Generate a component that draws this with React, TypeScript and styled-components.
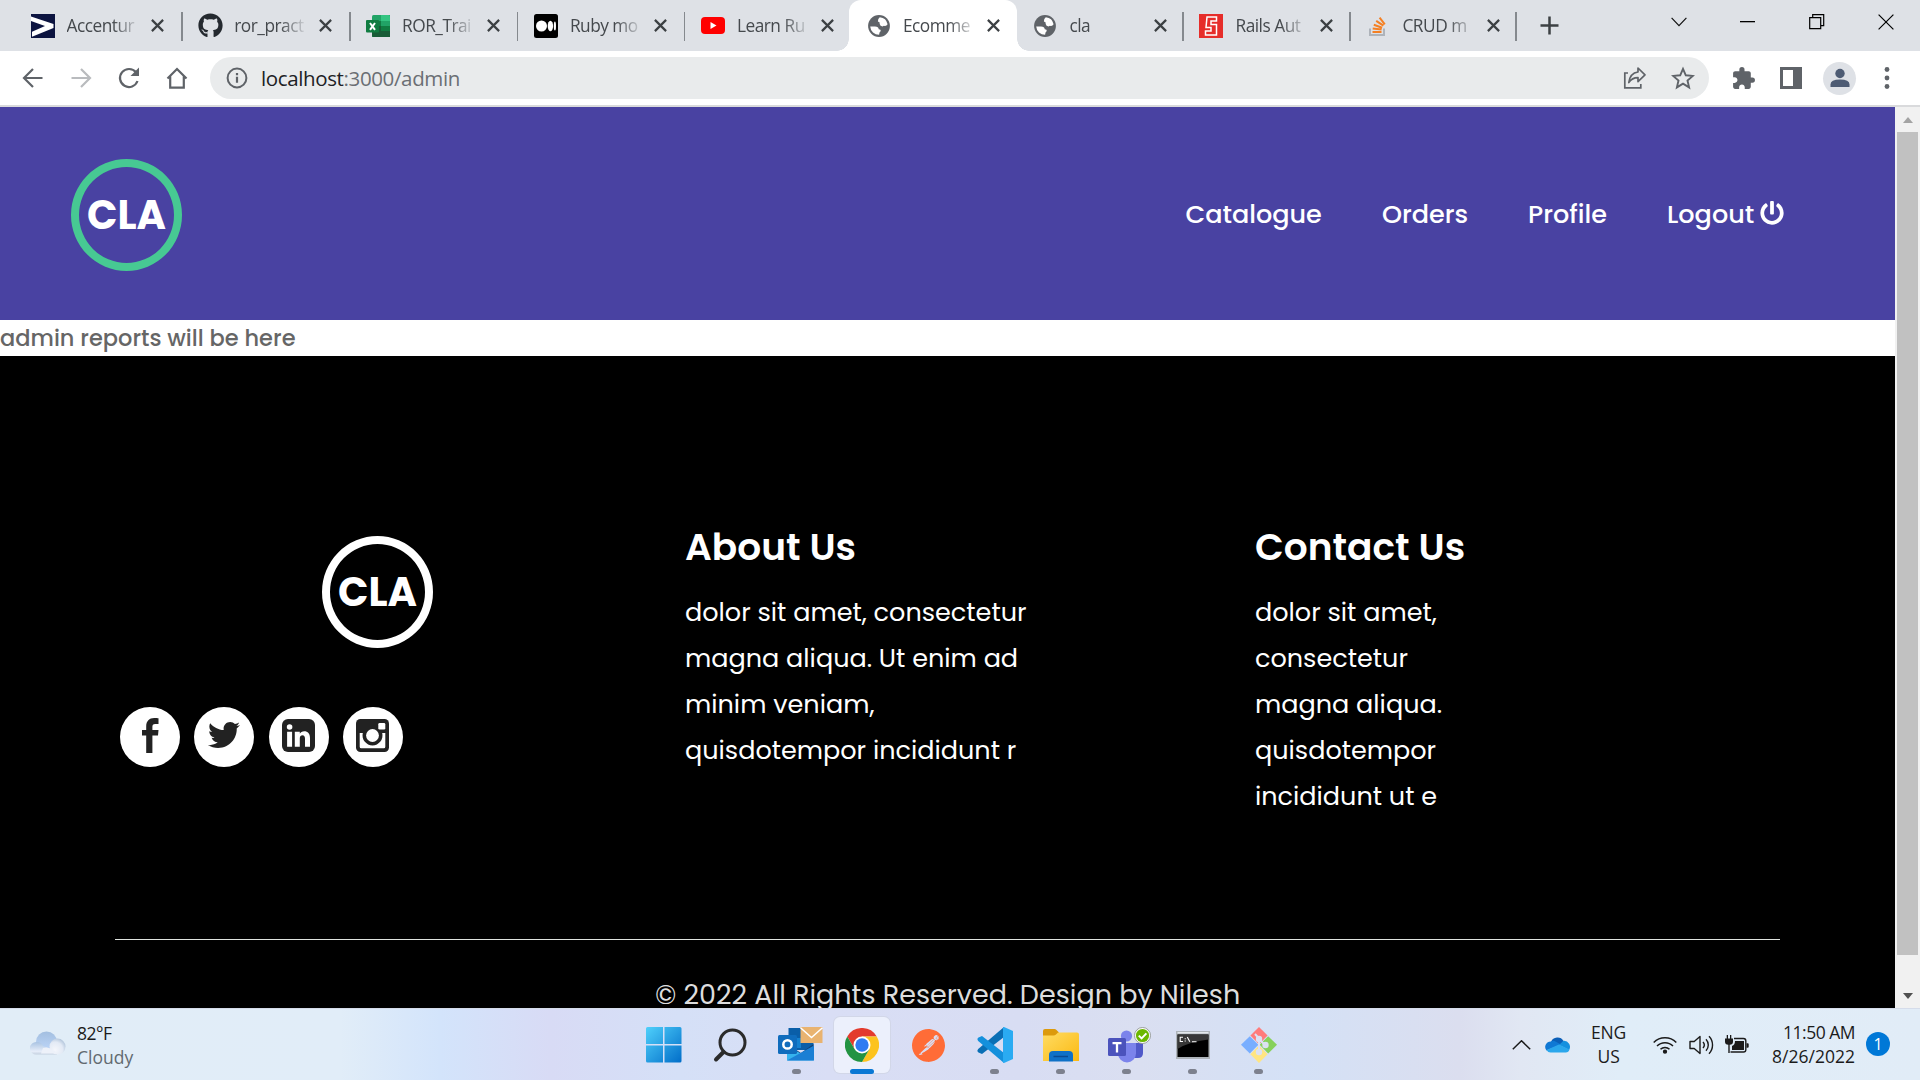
import React from "react";
import styled, { createGlobalStyle, css } from "styled-components";
import { FaGithub, FaTwitter, FaPowerOff } from "react-icons/fa";
import { MdExtension } from "react-icons/md";
import { SiPostman } from "react-icons/si";

const ui = `"Segoe UI", "Open Sans", "Noto Sans", sans-serif`;
const brand = `Poppins, Inter, "Open Sans", sans-serif`;

const Global = createGlobalStyle`
  * { box-sizing: border-box; }
  body { margin: 0; background: #fff; overflow: hidden; }
  h2, p { margin: 0; }
  svg { display: block; flex: none; }
`;

const Screen = styled.div`
  width: 1920px;
  height: 1080px;
  display: flex;
  flex-direction: column;
  overflow: hidden;
  font-family: ${ui};
`;

/* ---------- browser tabs ---------- */
const TabStrip = styled.div`
  display: flex;
  height: 51px;
  flex: none;
  padding-left: 14px;
  background: #dee1e6;
`;

const Tab = styled.div<{ $width: number; $active?: boolean; $divider?: boolean }>`
  position: relative;
  display: flex;
  align-items: center;
  width: ${(p) => p.$width}px;
  height: 51px;
  padding-left: ${(p) => (p.$active ? 18 : 16.5)}px;
  flex: none;
  ${(p) =>
    p.$divider &&
    css`
      &::after {
        content: "";
        position: absolute;
        right: -1px;
        top: 12px;
        width: 1.5px;
        height: 29px;
        background: #85898e;
      }
    `}
  ${(p) =>
    p.$active &&
    css`
      background: #fff;
      border-radius: 12px 12px 0 0;
      &::before,
      &::after {
        content: "";
        position: absolute;
        bottom: 0;
        width: 12px;
        height: 12px;
      }
      &::before {
        left: -12px;
        background: radial-gradient(circle at 0 0, transparent 11.5px, #fff 12px);
      }
      &::after {
        right: -12px;
        background: radial-gradient(circle at 100% 0, transparent 11.5px, #fff 12px);
      }
    `}
`;

const Favicon = styled.div`
  width: 24px;
  height: 24px;
  flex: none;
  display: flex;
  align-items: center;
  justify-content: center;
`;

const TabTitle = styled.span`
  width: 75px;
  margin: 0 9.5px 0 12px;
  white-space: nowrap;
  font-size: 17.3px;
  line-height: 28px;
  letter-spacing: -0.5px;
  color: #45494d;
  mask-image: linear-gradient(90deg, #000 46px, transparent 74px);
`;

const NewTab = styled.div`
  display: flex;
  align-items: center;
  width: 54px;
  padding-left: 24px;
`;

const WindowControls = styled.div`
  display: flex;
  align-items: center;
  height: 43px;
  margin-left: auto;
  & > div {
    width: 69px;
    display: flex;
    justify-content: center;
  }
`;

/* ---------- toolbar ---------- */
const Toolbar = styled.div`
  display: flex;
  align-items: center;
  height: 56px;
  flex: none;
  padding: 0 21px 0 21px;
  background: #fff;
  border-bottom: 2px solid #d9dadc;
`;

const NavButtons = styled.div`
  display: flex;
  gap: 24px;
  width: 189px;
`;

const Omnibox = styled.div`
  display: flex;
  align-items: center;
  width: 1499px;
  height: 42px;
  padding: 0 14px 0 16px;
  border-radius: 21px;
  background: #e9ebec;
`;

const Url = styled.span`
  flex: 1;
  padding-left: 13px;
  font-size: 20.5px;
  line-height: 28px;
  letter-spacing: -0.37px;
  color: #6b6f74;
  b {
    font-weight: 400;
    color: #202124;
  }
`;

const OmniActions = styled.div`
  display: flex;
  gap: 24px;
`;

const ToolActions = styled.div`
  display: flex;
  align-items: center;
  margin-left: auto;
`;

const Avatar = styled.div`
  display: flex;
  align-items: center;
  justify-content: center;
  width: 33px;
  height: 33px;
  margin: 0 19px 0 21px;
  border-radius: 50%;
  background: #dee1e6;
`;

/* ---------- page ---------- */
const Viewport = styled.div`
  display: flex;
  height: 901px;
  flex: none;
`;

const Page = styled.div`
  display: flex;
  flex-direction: column;
  width: 1895px;
  overflow: hidden;
  font-family: ${brand};
`;

const Header = styled.header`
  display: flex;
  align-items: center;
  justify-content: space-between;
  height: 213px;
  flex: none;
  padding: 2px 109px 0 71px;
  background: #4942a2;
`;

const Logo = styled.div<{ $ring: string }>`
  display: flex;
  align-items: center;
  justify-content: center;
  width: 111px;
  height: 112px;
  border: 8px solid ${(p) => p.$ring};
  border-radius: 50%;
  color: #fff;
  font-size: 40px;
  font-weight: 700;
  line-height: 40px;
`;

const Menu = styled.nav`
  display: flex;
  align-items: center;
`;

const MenuItem = styled.a<{ $width: number }>`
  display: flex;
  align-items: center;
  width: ${(p) => p.$width}px;
  color: #fff;
  font-size: 25.5px;
  font-weight: 500;
  line-height: 38px;
  padding-bottom: 2px;
  white-space: nowrap;
  svg { margin: -2px 0 0 6px; }
`;

const Report = styled.div`
  height: 36px;
  flex: none;
  color: #666;
  font-size: 22.5px;
  font-weight: 500;
  line-height: 36px;
`;

const Footer = styled.footer`
  flex: 1;
  padding: 167px 115px 0;
  background: #000;
  color: #fff;
`;

const Columns = styled.div`
  display: grid;
  grid-template-columns: 570px 570px 525px;
  height: 417px;
  border-bottom: 1px solid #dfe3df;
`;

const BrandColumn = styled.div`
  padding-top: 13px;
  ${Logo} { margin-left: 207px; }
`;

const Socials = styled.div`
  display: flex;
  gap: 14.3px;
  padding: 59px 0 0 5px;
`;

const Social = styled.a`
  display: flex;
  align-items: center;
  justify-content: center;
  width: 60px;
  height: 60px;
  padding-bottom: 4px;
  border-radius: 50%;
  background: #fff;
  color: #222;
`;

const Heading = styled.h2`
  padding-top: 1px;
  margin-bottom: 20px;
  font-size: 37.5px;
  font-weight: 600;
  line-height: 46px;
`;

const Line = styled.p`
  font-size: 25.5px;
  line-height: 45.9px;
  white-space: nowrap;
`;

const Copyright = styled.p`
  padding: 37px 0 0 540px;
  color: #ddd;
  font-size: 27px;
  line-height: 36px;
  white-space: nowrap;
`;

const Scrollbar = styled.div`
  display: flex;
  flex-direction: column;
  align-items: center;
  justify-content: space-between;
  width: 25px;
  padding: 10px 0 9px;
  background: #f1f1f1;
`;

const Thumb = styled.div`
  width: 21px;
  height: 823px;
  margin: 9px 0 auto;
  background: #c1c1c1;
`;

const Arrow = styled.div<{ $up?: boolean }>`
  border: 5.5px solid transparent;
  ${(p) =>
    p.$up
      ? css`border-top: 0; border-bottom: 6px solid #a3a3a3;`
      : css`border-bottom: 0; border-top: 6px solid #505050;`}
`;

/* ---------- taskbar ---------- */
const Taskbar = styled.div`
  display: flex;
  height: 72px;
  flex: none;
  border-top: 1px solid #d5dcea;
  background: linear-gradient(90deg, #e1edf7 0, #e1edf8 340px, #d3e4fb 440px, #d8dbf5 550px, #d5e0f7 680px, #d9def5 830px, #d8ddf3 1020px, #dadff1 1140px, #d4e1f6 1300px, #dbdeef 1460px, #e1e7f3 1520px, #e0edf8 1620px, #e1ecf7 100%);
`;

const Weather = styled.div`
  display: flex;
  align-items: center;
  width: 631px;
  padding: 2px 0 0 29px;
  gap: 11px;
  svg { margin-top: -5px; }
`;

const Stack = styled.div<{ $align?: string; $spacing?: number }>`
  display: flex;
  flex-direction: column;
  align-items: ${(p) => p.$align ?? "flex-start"};
  color: #1b1b1b;
  font-size: 17.5px;
  line-height: 23.5px;
  letter-spacing: ${(p) => p.$spacing ?? 0}px;
  white-space: nowrap;
`;

const Muted = styled.span`
  color: #626a70;
`;

const Tight = styled.span`
  letter-spacing: -0.5px;
`;

const Apps = styled.div`
  display: flex;
`;

const AppButton = styled.div<{ $active?: boolean; $dot?: boolean; $shift?: number }>`
  position: relative;
  display: flex;
  align-items: center;
  justify-content: center;
  width: 56px;
  height: 56px;
  margin: 8px 5.05px;
  padding-left: ${(p) => p.$shift ?? 0}px;
  border-radius: 6px;
  ${(p) => p.$active && css`background: #ecf0fc; box-shadow: 0 0 0 1px #d2d7e8;`}
  ${(p) =>
    (p.$active || p.$dot) &&
    css`
      &::after {
        content: "";
        position: absolute;
        bottom: -1px;
        left: calc(50% - ${p.$active ? 12 : 4.5}px);
        width: ${p.$active ? 24 : 9}px;
        height: 5px;
        border-radius: 3px;
        background: ${p.$active ? "#0a78d4" : "#7d818e"};
      }
    `}
`;

const Tray = styled.div`
  display: flex;
  align-items: center;
  flex: 1;
  justify-content: flex-end;
  padding-right: 30px;
`;

const Gap = styled.div<{ $w: number }>`
  width: ${(p) => p.$w}px;
  flex: none;
`;

const Badge = styled.div`
  display: flex;
  align-items: center;
  justify-content: center;
  width: 24px;
  height: 24px;
  margin-top: -1px;
  border-radius: 50%;
  background: #0078d7;
  color: #fff;
  font-size: 16px;
  line-height: 24px;
`;

/* ---------- icons ---------- */
const CloseX = () => (
  <svg width="13" height="13" viewBox="0 0 13 13" stroke="#3c4043" strokeWidth="2.2"><path d="M.9.9l11.200 11.200M12.100.9L.9 12.100" /></svg>
);

const Globe = () => (
  <svg width="22" height="22" viewBox="0 0 22 22">
    <circle cx="11" cy="11" r="10.900" fill="#5f6368" />
    <path fill="#fff" d="M11.800 2.200A8.900 8.900 0 0 1 19.600 9.300Q18.400 11.200 16.600 10.900 15.500 10.600 14.600 11.400 12 11.200 11.700 9 12.200 6.900 9.900 6.500 9.200 4.200 11.800 2.200z" />
    <path fill="#fff" d="M2.200 11.500H7q3.600 0 3.700 2.800 2.500.2 1.900 2-1.400.7-1.500 3.500A8.900 8.900 0 0 1 2.200 11.500z" />
  </svg>
);

const AccentureIcon = () => (
  <svg width="24" height="24" viewBox="0 0 24 24"><path fill="#0c1440" d="M0 0h24v24H0z" /><path fill="#fff" d="M0 2.500L22.500 10v4L1 22.800v-5L14 12 0 7z" /></svg>
);
const ExcelIcon = () => (
  <svg width="24" height="22" viewBox="0 0 24 22">
    <path fill="#21a366" d="M6 1.500Q6 0 7.500 0H24v22H6z" /><path fill="#33c481" d="M15 0h7.500Q24 0 24 1.500V6h-9z" /><path fill="#107c41" d="M6 6h9v5H6zM15 11h9v5h-9z" /><path fill="#185c37" d="M6 11h9v5h9v6H7.500Q6 22 6 20.500z" /><rect y="5" width="13" height="12.500" rx="1" fill="#107c41" />
    <path stroke="#fff" strokeWidth="2" d="M4 8l5 6.800M9 8l-5 6.800" />
  </svg>
);
const MediumIcon = () => (
  <svg width="24" height="24" viewBox="0 0 24 24"><rect width="24" height="24" rx="2.500" /><circle cx="7.500" cy="12" r="5.500" fill="#fff" /><ellipse cx="16.400" cy="12" rx="2.700" ry="5.200" fill="#fff" /><ellipse cx="20.900" cy="12" rx="1.100" ry="4.600" fill="#fff" /></svg>
);
const YoutubeIcon = () => (
  <svg width="24" height="17" viewBox="0 0 24 17"><rect width="24" height="17" rx="4" fill="#f00" /><path fill="#fff" d="M9.500 5v7l6-3.500z" /></svg>
);
const RailsIcon = () => (
  <svg width="24" height="24" viewBox="0 0 24 24"><path fill="#e62d2a" d="M0 0h24v24H0z" /><path fill="none" stroke="#fff" strokeWidth="1.500" d="M8 3h9.500v4h-5.500v3.500h5.500V21H6.500v-4H12v-3.500H7z" /></svg>
);
const StackIcon = () => (
  <svg width="18" height="20" viewBox="0 0 18 20" fill="none" strokeWidth="2"><path stroke="#aeb3ba" d="M1 12.500V19h14v-6.500" /><path stroke="#f48024" d="M3.500 16h9M3.700 12.600l8.900 1M4.800 8.700l8.300 3M7.200 4.800l7.200 4.900M10.600 1.600l5.200 6.700" /></svg>
);

const tabs: { title: string; icon: React.ReactNode; width: number; active?: boolean; divider?: boolean }[] = [
  { title: "Accentur", icon: <AccentureIcon />, width: 167.8, divider: true },
  { title: "ror_pract", icon: <FaGithub size={25} color="#24292f" />, width: 167.8, divider: true },
  { title: "ROR_Trai", icon: <ExcelIcon />, width: 167.8, divider: true },
  { title: "Ruby mo", icon: <MediumIcon />, width: 167.1, divider: true },
  { title: "Learn Ru", icon: <YoutubeIcon />, width: 164.5 },
  { title: "Ecomme", icon: <Globe />, width: 168, active: true },
  { title: "cla", icon: <Globe />, width: 166, divider: true },
  { title: "Rails Aut", icon: <RailsIcon />, width: 167, divider: true },
  { title: "CRUD m", icon: <StackIcon />, width: 166, divider: true },
];

const stroke = { fill: "none", stroke: "#5f6368", strokeWidth: 2.2 };

const FacebookGlyph = () => (
  <svg width="17" height="35" viewBox="0 0 17 35" fill="#222"><path d="M16.500.3v5.600h-3.300c-2.200 0-2.800 1.200-2.800 2.900v3.300h6.100l-.5 5.400h-5.600V35H4.200V17.500H0v-5.400h4.200V8.200C4.200 3.200 7.300 0 12.200 0c2 0 3.600.2 4.300.3z" /></svg>
);
const LinkedinGlyph = () => (
  <svg width="33" height="33" viewBox="0 0 33 33"><rect width="33" height="33" rx="6" fill="#222" /><g fill="#fff"><circle cx="7.600" cy="8" r="2.800" /><path d="M5.100 12.700h5v15h-5zM12.800 12.700h5v2.100c.8-1.300 2.200-2.500 4.500-2.500 3.500 0 5.700 2.300 5.700 6.700v8.700h-5v-8c0-2.200-.8-3.500-2.500-3.500-1.600 0-2.700 1.200-2.700 3v8.500h-5z" /></g></svg>
);
const InstagramGlyph = () => (
  <svg width="33" height="33" viewBox="0 0 33 33"><rect width="33" height="33" rx="4.500" fill="#222" /><path fill="#fff" d="M3.700 14h3.100a10 10 0 1 0 19.400 0h3.100v13.800q0 1.500-1.500 1.500H5.200q-1.500 0-1.500-1.500z" /><circle cx="16.500" cy="16.500" r="6.400" fill="#fff" /><rect x="22.300" y="4" width="7" height="6.500" rx="1.300" fill="#fff" /></svg>
);

const CloudIcon = () => (
  <svg width="37" height="24" viewBox="0 0 37 24">
    <defs>
      <linearGradient id="c1" x2="0" y2="1"><stop stopColor="#a3bfe0" /><stop offset="1" stopColor="#c0d8fb" /></linearGradient>
      <linearGradient id="c2" x2="0" y2="1"><stop stopColor="#a9c3e2" /><stop offset=".75" stopColor="#e6edf9" /><stop offset="1" stopColor="#c3cfde" /></linearGradient>
      <radialGradient id="c3" cx=".35" cy=".7" r=".8"><stop stopColor="#f4f6fb" /><stop offset=".6" stopColor="#e3eaf5" /><stop offset="1" stopColor="#a9bed6" /></radialGradient>
    </defs>
    <circle cx="17.500" cy="11" r="10.500" fill="url(#c1)" />
    <path fill="url(#c2)" d="M8 11a6.300 6.300 0 1 0 0 12.500h20V18q-8 0-14-3-2-4-6-4z" />
    <circle cx="28.500" cy="15.600" r="8" fill="url(#c3)" />
    <path fill="#edf1f9" d="M14 17q5-1.500 8 1l4 2.500v2H12z" />
  </svg>
);
const WindowsIcon = () => (
  <svg width="36" height="36" viewBox="0 0 36 36"><defs><linearGradient id="w" gradientUnits="userSpaceOnUse" x1="0" y1="0" x2="36" y2="36"><stop stopColor="#4fd0fb" /><stop offset="1" stopColor="#006cc8" /></linearGradient></defs><path fill="url(#w)" d="M1.500 0H17v17H0V1.500Q0 0 1.500 0zM18.500 0H34q1.500 0 1.500 1.500V17h-17zM0 18.500h17v17H1.500Q0 35.500 0 34zM18.500 18.500h17V34q0 1.500-1.500 1.500H18.500z" /></svg>
);
const SearchIcon = () => (
  <svg width="34" height="35" viewBox="0 0 34 35" fill="none" stroke="#2b2b2b"><circle cx="19.500" cy="14.500" r="12.500" strokeWidth="3" /><path strokeWidth="4" strokeLinecap="round" d="M10.500 24L3 31.500" /></svg>
);
const OutlookIcon = () => (
  <svg width="46" height="36" viewBox="0 0 46 36">
    <path fill="#0a5ea8" d="M11.500 1h25v22h-25z" /><path fill="#28a8ea" d="M24 6h12.500v10H24z" /><path fill="#1481d0" d="M11.500 11h12.500v10H11.500z" /><path fill="#123f73" d="M10 17l14 9 12.500-9v12H10z" /><path fill="#35b3ee" d="M10 33.500V19l27 14.500z" /><path fill="#1b7fd4" d="M37 18.500V33.500H10z" />
    <rect x="1" y="8" width="19" height="19" rx="1.500" fill="#0f6cbd" /><circle cx="10.500" cy="17.400" r="4.200" fill="none" stroke="#fff" strokeWidth="2.500" />
    <path fill="#e9b370" d="M23.500 0h22v16h-22z" /><path fill="none" stroke="#fff" strokeWidth="1.500" d="M23.500.8l11 9.700 11-9.700" />
  </svg>
);
const ChromeIcon = () => (
  <svg width="34" height="34" viewBox="0 0 48 48">
    <path fill="#e33b2e" d="M3.200 12A24 24 0 0 1 44.800 12L24 12 13.600 30z" /><path fill="#fcc31e" d="M44.800 12A24 24 0 0 1 24 48L34.400 30 24 12z" /><path fill="#229342" d="M3.200 12A24 24 0 0 0 24 48L34.400 30H13.600z" /><circle cx="24" cy="24" r="12" fill="#fff" /><circle cx="24" cy="24" r="9.400" fill="#2f7bf2" />
  </svg>
);
const VsCodeIcon = () => (
  <svg width="36" height="36" viewBox="0 0 36 36">
    <path fill="#0a6fb5" d="M27 0v10L5 27l-3.500-1.500Q-.5 24 1.200 22z" /><path fill="#1490dc" d="M27 36V26L5 9l-3.500 1.500q-2 1.500-.3 3.500z" /><path fill="#2aabf2" d="M26 .3L27 0l9 4v28l-9 4-1-.5z" />
  </svg>
);
const FolderIcon = () => (
  <svg width="36" height="33" viewBox="0 0 36 33"><defs><linearGradient id="f" x2="1" y2="1"><stop stopColor="#ffdc63" /><stop offset="1" stopColor="#fbb912" /></linearGradient></defs><path fill="#dc9a0c" d="M0 2Q0 0 2 0h9.500q1 0 2 1L16 3.500 12 8H0z" /><path fill="url(#f)" d="M0 6.500h10.500q1.500 0 2.500-1l2-2h19q2 0 2 2V32H0z" /><path fill="#0f71c7" d="M6 32.500V26q0-4 4-4h16q4 0 4 4v6.500z" /><path stroke="#0a4a91" strokeWidth="1.500" d="M10.500 27.500h14.500" /></svg>
);
const TeamsIcon = () => (
  <svg width="44" height="37" viewBox="0 0 44 37"><circle cx="19.500" cy="9" r="5.600" fill="#7b83eb" /><path fill="#5059c9" d="M26 16h10v10q0 5-5 5h-5z" /><path fill="#7b83eb" d="M11 16h18v10.500a9 9 0 0 1-18 0z" /><rect x="1" y="11" width="18" height="18" rx="1.500" fill="#4b53bc" /><path stroke="#fff" strokeWidth="2.300" d="M5.500 16.100h9M10 16v9.500" /><circle cx="35.500" cy="8.500" r="8" fill="#fff" stroke="#8f9490" strokeWidth=".9" /><circle cx="35.500" cy="8.500" r="6.600" fill="#6bb700" /><path d="M31.800 8.600l2.800 2.800 4.800-5" fill="none" stroke="#fff" strokeWidth="2" /></svg>
);
const TerminalIcon = () => (
  <svg width="34" height="28" viewBox="0 0 34 28"><path fill="#aeb4ba" d="M0 0h34v28H0z" /><path fill="#e4e8ec" d="M1.500 1h31v1.500h-31z" /><path fill="#000" d="M1.500 3.500h31v22.500h-31z" /><path fill="#383838" d="M1.500 3.500h31v5Q12 11 1.500 18z" /><path d="M7 6.300H4.200v4.200H7M9.200 7.200v1M9.200 9.600v1M11.300 6l2.500 4.800M16 10.700h4.500" fill="none" stroke="#fff" strokeWidth="1.100" /></svg>
);
const GitIcon = () => (
  <svg width="36" height="36" viewBox="0 0 36 36"><path fill="#ff7b7b" d="M18 0l8.600 8.600L18 17.200 9.400 8.600z" /><path fill="#78aeff" d="M8.800 9.200l8.600 8.600-8.600 8.600L0 17.800z" /><path fill="#87d15b" d="M27.200 9.200l8.800 8.600-8.800 8.600-8.600-8.600z" /><path fill="#ffe582" d="M18 18.400l8.600 8.800L18 36l-8.600-8.800z" /><g stroke="#dce1f3" strokeWidth="2" fill="#dce1f3"><path d="M14 7l4 4.500V26M18 12l6 6" fill="none" /><circle cx="18" cy="12" r="2.200" /><circle cx="18" cy="25" r="2.200" /><circle cx="24.500" cy="18" r="2.200" /></g></svg>
);
const OneDriveIcon = () => (
  <svg width="25" height="17" viewBox="0 0 25 17"><path fill="#0a5fb8" d="M6 6a7 7 0 0 1 12.500-1L15 10z" /><path fill="#0f78d4" d="M6 5.500a5.500 5.500 0 0 0-4.500 9L16 8.500 9.500 5Q8 4.500 6 5.500z" /><path fill="#1490df" d="M14 9l4.500-4.200A6 6 0 0 1 24 14z" /><path fill="#2ba7ec" d="M1.500 14L14 8.500l10.500 5A4 4 0 0 1 20.500 16.500H5.500q-2.500 0-4-2.500z" /></svg>
);
const WifiIcon = () => (
  <svg width="24" height="18" viewBox="0 0 24 18" fill="none" stroke="#1b1b1b" strokeWidth="1.500"><path d="M.7 6.500a16 16 0 0 1 22.600 0M4 10a11.300 11.300 0 0 1 16 0M7.500 13.300a6.400 6.400 0 0 1 9 0" /><circle cx="12" cy="15.700" r="1.400" fill="#1b1b1b" /></svg>
);
const SpeakerIcon = () => (
  <svg width="25" height="20" viewBox="0 0 25 20" fill="none" stroke="#1b1b1b" strokeWidth="1.400"><path strokeLinejoin="round" d="M1 6.500h4.200L11 1.500v17l-5.800-5H1z" /><path d="M14 7a4.500 4.500 0 0 1 0 6M17 4.200a8.500 8.500 0 0 1 0 11.600M20 1.300a12.500 12.500 0 0 1 0 17.400" /></svg>
);
const BatteryIcon = () => (
  <svg width="24" height="19" viewBox="0 0 24 19"><path fill="none" stroke="#1b1b1b" strokeWidth="1.400" d="M9 3.500h9.500a2.300 2.300 0 0 1 2.300 2.300v8.900a2.300 2.300 0 0 1-2.300 2.300H5.500" /><path fill="#1b1b1b" d="M10 6h9v9H7v-4q3-1 3-5zM21.500 8.200h1.200q1 0 1 1v2.600q0 1-1 1h-1.200zM0 3.500h1.700V0H3v3.500h2V0h1.300v3.500H8v3.200Q8 9.500 4.700 9.700V18H3.300V9.700Q0 9.500 0 6.700z" /></svg>
);

const about = ["dolor sit amet, consectetur", "magna aliqua. Ut enim ad", "minim veniam,", "quisdotempor incididunt r"];
const contact = ["dolor sit amet,", "consectetur", "magna aliqua.", "quisdotempor", "incididunt ut e"];

export default function App() {
  return (
    <Screen>
      <Global />
      <TabStrip>
        {tabs.map((t) => (
          <Tab key={t.title} $width={t.width} $active={t.active} $divider={t.divider}>
            <Favicon>{t.icon}</Favicon>
            <TabTitle>{t.title}</TabTitle>
            <CloseX />
          </Tab>
        ))}
        <NewTab><svg width="19" height="19" viewBox="0 0 19 19" stroke="#3c4043" strokeWidth="2.500"><path d="M9.500.5v18M.5 9.500h18" /></svg></NewTab>
        <WindowControls>
          <div><svg width="16" height="10" viewBox="0 0 16 10" fill="none" stroke="#111" strokeWidth="1.200"><path d="M.6.8L8 8.700 15.400.8" /></svg></div>
          <div><svg width="15" height="2" viewBox="0 0 15 2"><path fill="#000" d="M0 0h15v1.300H0z" /></svg></div>
          <div><svg width="16" height="16" viewBox="0 0 16 16" fill="none" stroke="#000" strokeWidth="1.200"><path d="M.7 3.700h11v11H.7zM3.700 3.500V.7h11v11h-2.800" /></svg></div>
          <div><svg width="16" height="16" viewBox="0 0 16 16" stroke="#000" strokeWidth="1.200"><path d="M.6.6l14.800 14.800M15.400.6L.6 15.400" /></svg></div>
        </WindowControls>
      </TabStrip>
      <Toolbar>
        <NavButtons>
          <svg width="24" height="24" viewBox="0 0 24 24" {...stroke}><path d="M21.500 12H3.500M12 3l-9 9 9 9" /></svg>
          <svg width="24" height="24" viewBox="0 0 24 24" {...stroke} stroke="#b9bbbe"><path d="M2.500 12h18M12 3l9 9-9 9" /></svg>
          <svg width="24" height="24" viewBox="0 0 24 24" {...stroke}><path d="M20.500 15A9 9 0 1 1 19 6.300" /><path fill="#5f6368" stroke="none" d="M22 1.500V10h-8.500z" /></svg>
          <svg width="24" height="24" viewBox="0 0 24 24" {...stroke}><path d="M5.200 10.500v11.200h13.600V10.500M2.500 12.500L12 3l9.500 9.500" /></svg>
        </NavButtons>
        <Omnibox>
          <svg width="22" height="22" viewBox="0 0 22 22" fill="none" stroke="#5f6368" strokeWidth="2"><circle cx="11" cy="11" r="9.400" /><path d="M11 9.800v6M11 6v2.200" strokeWidth="2.200" /></svg>
          <Url><b>localhost</b>:3000/admin</Url>
          <OmniActions>
            <svg width="24" height="24" viewBox="0 0 24 24" fill="none" stroke="#5f6368" strokeWidth="1.700"><path d="M5 7H1.800v14.800h16V18" /><path strokeLinejoin="round" d="M15 2l7 6.800-7 6.800v-4q-6 0-9.200 5Q7 7 15 6z" /></svg>
            <svg width="24" height="24" viewBox="0 0 24 24" fill="none" stroke="#5f6368" strokeWidth="1.900"><path d="M12 2.800l2.800 6.500 7 .6-5.300 4.600 1.600 6.900-6.100-3.700-6.100 3.700 1.600-6.900L2.200 9.900l7-.6z" /></svg>
          </OmniActions>
        </Omnibox>
        <ToolActions>
          <MdExtension size={25} color="#5f6368" />
          <Gap $w={24} />
          <svg width="22" height="22" viewBox="0 0 22 22"><path fill="#5f6368" fillRule="evenodd" d="M0 0h22v22H0zM3 3v16h10V3z" /></svg>
          <Avatar><svg width="20" height="20" viewBox="0 0 20 20" fill="#4d5b73"><circle cx="10" cy="5.500" r="4.700" /><path d="M.5 19v-2.500q0-5 9.500-5t9.500 5V19z" /></svg></Avatar>
          <svg width="24" height="24" viewBox="0 0 24 24" fill="#5f6368"><circle cx="12" cy="3.500" r="2.400" /><circle cx="12" cy="12" r="2.400" /><circle cx="12" cy="20.500" r="2.400" /></svg>
        </ToolActions>
      </Toolbar>
      <Viewport>
        <Page>
          <Header>
            <Logo $ring="#47c993">CLA</Logo>
            <Menu>
              <MenuItem $width={196.5}>Catalogue</MenuItem>
              <MenuItem $width={146}>Orders</MenuItem>
              <MenuItem $width={139}>Profile</MenuItem>
              <MenuItem $width={119}>Logout<FaPowerOff size={24} /></MenuItem>
            </Menu>
          </Header>
          <Report>admin reports will be here</Report>
          <Footer>
            <Columns>
              <BrandColumn>
                <Logo $ring="#fff">CLA</Logo>
                <Socials>
                  <Social><FacebookGlyph /></Social>
                  <Social><FaTwitter size={32} /></Social>
                  <Social><LinkedinGlyph /></Social>
                  <Social><InstagramGlyph /></Social>
                </Socials>
              </BrandColumn>
              <div>
                <Heading>About Us</Heading>
                {about.map((text) => <Line key={text}>{text}</Line>)}
              </div>
              <div>
                <Heading>Contact Us</Heading>
                {contact.map((text) => <Line key={text}>{text}</Line>)}
              </div>
            </Columns>
            <Copyright>© 2022 All Rights Reserved. Design by Nilesh</Copyright>
          </Footer>
        </Page>
        <Scrollbar><Arrow $up /><Thumb /><Arrow /></Scrollbar>
      </Viewport>
      <Taskbar>
        <Weather>
          <CloudIcon />
          <Stack><Tight>82°F</Tight><Muted>Cloudy</Muted></Stack>
        </Weather>
        <Apps>
          <AppButton><WindowsIcon /></AppButton>
          <AppButton><SearchIcon /></AppButton>
          <AppButton $dot $shift={7}><OutlookIcon /></AppButton>
          <AppButton $active><ChromeIcon /></AppButton>
          <AppButton><SiPostman size={33} color="#ff6c37" /></AppButton>
          <AppButton $dot><VsCodeIcon /></AppButton>
          <AppButton $dot><FolderIcon /></AppButton>
          <AppButton $dot $shift={5}><TeamsIcon /></AppButton>
          <AppButton $dot><TerminalIcon /></AppButton>
          <AppButton $dot><GitIcon /></AppButton>
        </Apps>
        <Tray>
          <svg width="19" height="10" viewBox="0 0 19 10" fill="none" stroke="#1b1b1b" strokeWidth="1.500"><path d="M.8 9.200l8.700-8.400 8.700 8.400" /></svg>
          <Gap $w={14} />
          <OneDriveIcon />
          <Gap $w={21} />
          <Stack $align="center" $spacing={-0.2}><span>ENG</span><span>US</span></Stack>
          <Gap $w={27} />
          <WifiIcon />
          <Gap $w={12} />
          <SpeakerIcon />
          <Gap $w={11} />
          <BatteryIcon />
          <Gap $w={23} />
          <Stack $align="flex-end"><Tight>11:50 AM</Tight><span>8/26/2022</span></Stack>
          <Gap $w={11} />
          <Badge>1</Badge>
        </Tray>
      </Taskbar>
    </Screen>
  );
}
